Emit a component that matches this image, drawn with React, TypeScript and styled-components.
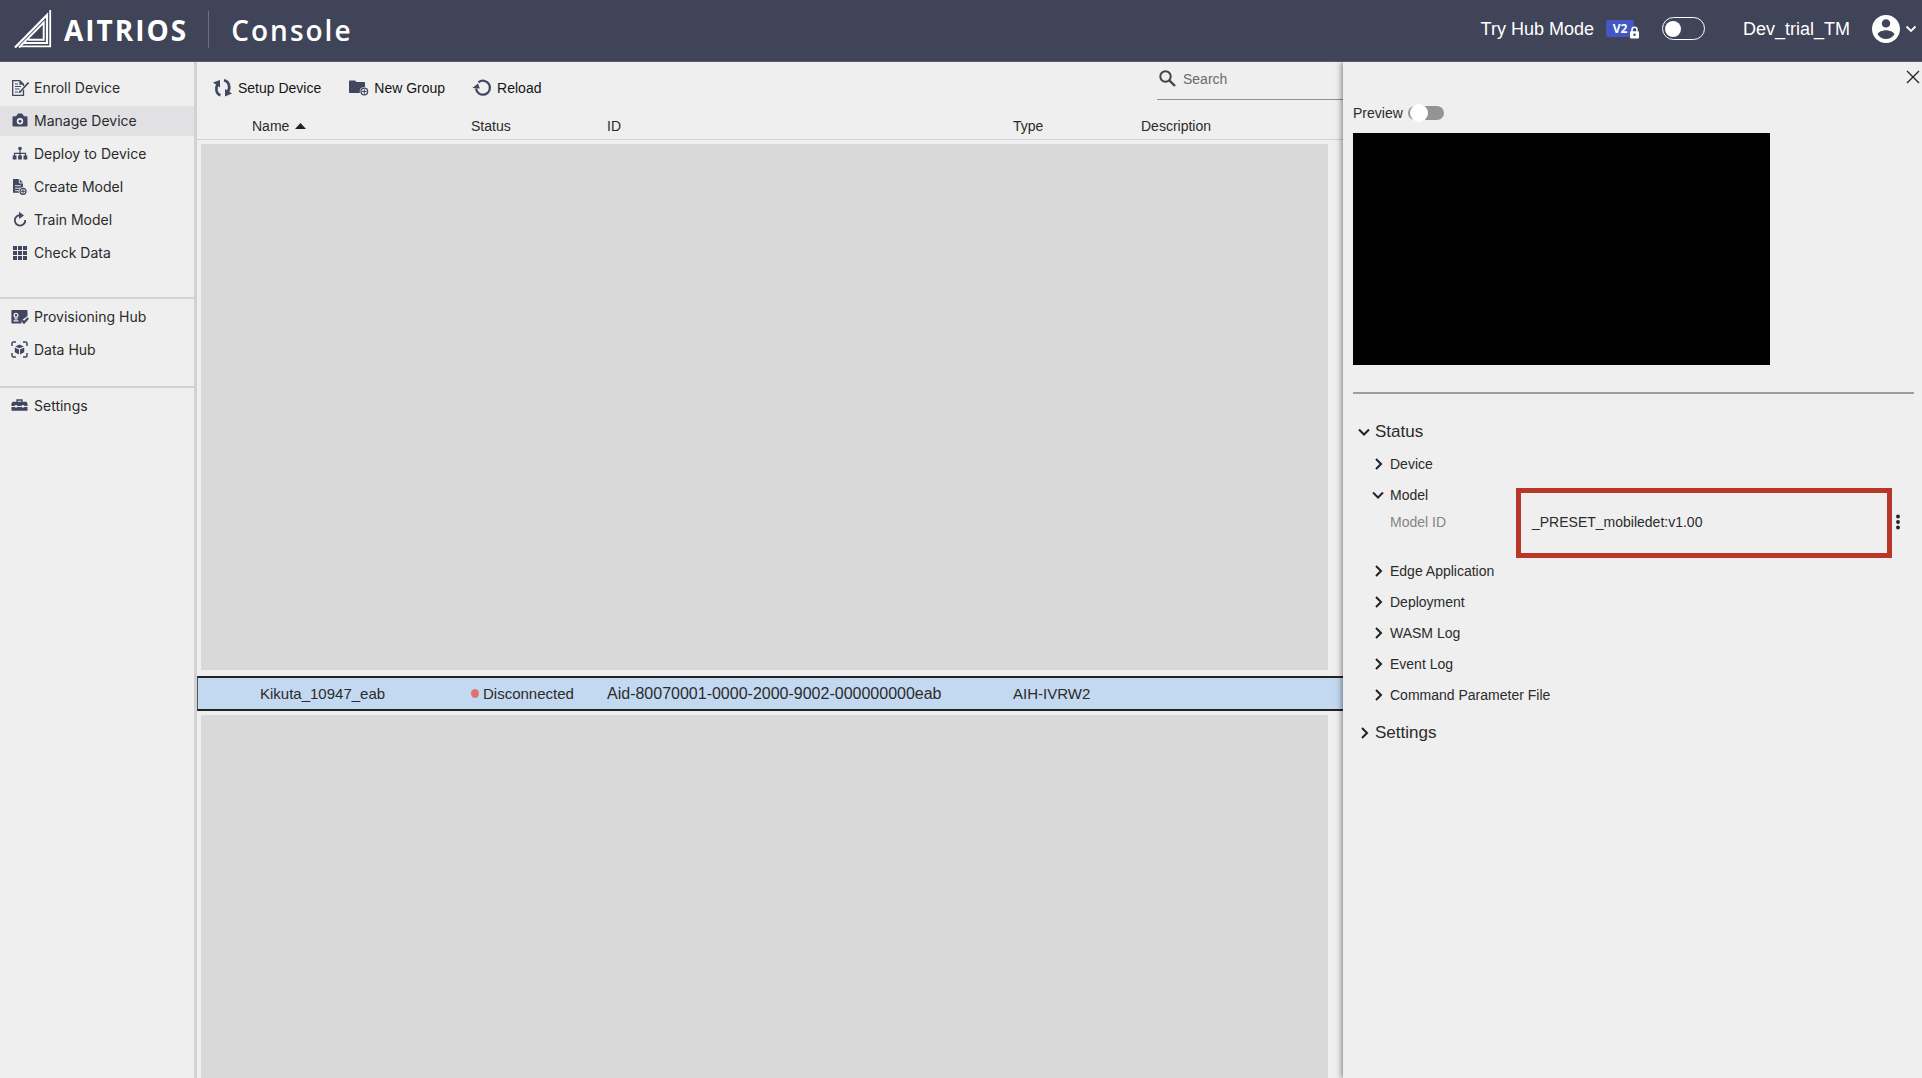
import React, { useState } from 'react';
import styled, { createGlobalStyle } from 'styled-components';

const color = {
  bar: '#404458',
  page: '#efefef',
  line: '#d2d2d2',
  icon: '#414760',
  text: '#2b2b2b',
};

const GlobalStyle = createGlobalStyle`
  *, *::before, *::after { box-sizing: border-box; }
  body {
    margin: 0;
    background: ${color.page};
    color: ${color.text};
    font-family: "Liberation Sans", Arial, sans-serif;
    font-size: 14px;
    line-height: 20px;
  }
  button, input { font: inherit; color: inherit; }
  button { border: 0; padding: 0; background: none; cursor: pointer; }
  svg { display: block; flex: none; }
`;

const Shell = styled.div`
  display: flex;
  flex-direction: column;
  height: 100vh;
  overflow: hidden;
`;

const TopBar = styled.header`
  display: flex;
  justify-content: space-between;
  flex: none;
  height: 62px;
  padding: 0 5px 0 14px;
  background: ${color.bar};
  border-bottom: 1px solid #5a5570;
  color: #fff;
`;

const Brand = styled.div`
  display: flex;
  align-items: center;
  padding-bottom: 3px;
`;

const Wordmark = styled.span<{ $weight: number }>`
  font-family: "Open Sans", sans-serif;
  font-size: 28px;
  line-height: 36px;
  font-weight: ${(p) => p.$weight};
  letter-spacing: 2px;
  padding-top: 1px;
`;

const BrandName = styled.span`
  display: flex;
  margin-left: 12px;
`;

const BrandRule = styled.span`
  width: 1px;
  height: 37px;
  margin: 0 22px 0 20px;
  background: #6d7080;
`;

const Account = styled.div`
  display: flex;
  align-items: center;
  padding-bottom: 4px;
  font-size: 18px;
`;

const ModeLabel = styled.label`
  display: flex;
  align-items: center;
  cursor: pointer;
`;

const Badge = styled.span`
  position: relative;
  width: 28px;
  height: 17px;
  margin: 0 28px 0 12px;
  border-radius: 2px;
  background: #4257c4;
  font: 700 12px/17px "Open Sans", sans-serif;
  text-align: center;
  svg { position: absolute; left: 23px; top: 6px; }
`;

const ModeSwitch = styled.input`
  appearance: none;
  display: flex;
  align-items: center;
  width: 43px;
  height: 23px;
  margin: 0;
  padding: 0 2px;
  border: 1px solid #fff;
  border-radius: 12px;
  &::before {
    content: "";
    width: 16px;
    height: 16px;
    border-radius: 50%;
    background: #fff;
  }
  &:checked { justify-content: flex-end; }
`;

const UserName = styled.span`
  margin: 0 22px 0 38px;
`;

const UserButton = styled.button`
  display: flex;
  align-items: center;
  gap: 5px;
`;

const Body = styled.div`
  display: grid;
  grid-template-columns: 197px minmax(0, 1fr) 579px;
  flex: 1;
  min-height: 0;
`;

const Sidebar = styled.nav`
  border-right: 3px solid ${color.line};
`;

const NavGroup = styled.ul<{ $top: number; $bottom: number; $last?: boolean }>`
  display: flex;
  flex-direction: column;
  gap: 3px;
  margin: 0;
  padding: ${(p) => p.$top}px 0 ${(p) => p.$bottom}px;
  list-style: none;
  border-bottom: ${(p) => (p.$last ? 0 : 2)}px solid ${color.line};
`;

const NavLink = styled.a<{ $active?: boolean }>`
  display: flex;
  align-items: center;
  gap: 5px;
  height: 30px;
  padding-left: 11px;
  background: ${(p) => (p.$active ? '#e1e1e4' : 'transparent')};
  color: ${color.text};
  font-family: Inter, sans-serif;
  text-decoration: none;
`;

const Main = styled.main`
  min-width: 0;
  overflow: hidden;
`;

const Toolbar = styled.div`
  display: flex;
  justify-content: space-between;
  height: 53px;
  padding-left: 15px;
`;

const Actions = styled.div`
  display: flex;
  align-items: center;
  gap: 27px;
  padding-bottom: 2px;
`;

const Action = styled.button`
  display: flex;
  align-items: center;
  gap: 5px;
  color: #151515;
`;

const SearchBox = styled.label`
  display: flex;
  align-items: center;
  gap: 7px;
  width: 186px;
  height: 38px;
  padding: 0 0 4px 2px;
  border-bottom: 1px solid #8f8f8f;
`;

const SearchInput = styled.input`
  width: 100%;
  min-width: 0;
  padding: 0;
  border: 0;
  outline: 0;
  background: none;
  &::placeholder { color: #6a6a70; opacity: 1; }
`;

const Table = styled.table`
  width: 100%;
  table-layout: fixed;
  border-collapse: separate;
  border-spacing: 0;
  text-align: left;
`;

const HeadCell = styled.th<{ $width?: number; $indent?: number }>`
  width: ${(p) => (p.$width ? `${p.$width}px` : 'auto')};
  height: 25px;
  padding: 0 0 3px ${(p) => p.$indent || 0}px;
  border-bottom: 1px solid ${color.line};
  font-weight: 400;
`;

const SortButton = styled.button`
  display: flex;
  align-items: center;
  gap: 6px;
`;

const MaskCell = styled.td`
  padding: 4px 15px 6px 4px;
`;

const Mask = styled.div`
  height: 526px;
  background: #d9d9d9;
`;

const DeviceRow = styled.tr`
  background: #c3d9f1;
  font-size: 15px;
`;

const Cell = styled.td<{ $indent?: number; $large?: boolean }>`
  height: 35px;
  padding: 0 0 0 ${(p) => p.$indent || 0}px;
  border: 0 solid #222;
  border-width: 2px 0;
  font-size: ${(p) => (p.$large ? 16 : 15)}px;
  &:first-child { border-left: 1px solid #555; }
`;

const State = styled.span`
  display: flex;
  align-items: center;
  gap: 4px;
  &::before {
    content: "";
    width: 8px;
    height: 9px;
    border-radius: 50%;
    background: #e0716c;
  }
`;

const Panel = styled.aside`
  position: relative;
  padding: 8px 8px 0 10px;
  background: ${color.page};
  box-shadow: -1px 0 6px rgba(0, 0, 0, 0.5);
  clip-path: inset(0 0 0 -12px);
`;

const PanelTop = styled.div`
  display: flex;
  justify-content: flex-end;
  height: 33px;
  margin-right: -6px;
`;

const CloseButton = styled.button`
  height: 14px;
`;

const PreviewLabel = styled.label`
  display: flex;
  align-items: center;
  gap: 5px;
  width: max-content;
  height: 20px;
`;

const PreviewSwitch = styled.input`
  appearance: none;
  display: flex;
  align-items: center;
  width: 36px;
  height: 14px;
  margin: 0;
  border-radius: 7px;
  background: #949494;
  &::before {
    content: "";
    width: 18px;
    height: 18px;
    margin: 0 2px;
    border-radius: 50%;
    background: #fff;
  }
  &:checked { justify-content: flex-end; }
`;

const PreviewScreen = styled.div`
  width: 417px;
  max-width: 100%;
  height: 232px;
  margin: 10px 0 27px;
  background: #000;
`;

const Divider = styled.hr`
  height: 2px;
  margin: 0 0 22px;
  border: 0;
  background: #9d9d9d;
`;

const Group = styled.section`
  margin-bottom: 7px;
`;

const Fold = styled.button<{ $level: number }>`
  display: flex;
  align-items: center;
  gap: ${(p) => (p.$level ? 5 : 4)}px;
  height: ${(p) => (p.$level ? 31 : 32)}px;
  padding-left: ${(p) => (p.$level ? 18 : 4)}px;
  font-size: ${(p) => (p.$level ? 14 : 17)}px;
`;

const Field = styled.div`
  display: grid;
  grid-template-columns: 126px 1fr 12px;
  align-items: center;
  margin: 0 10px 21px 37px;
  height: 24px;
`;

const FieldName = styled.span`
  color: #858585;
`;

const FieldValue = styled.span`
  position: relative;
  padding-left: 16px;
`;

const Highlight = styled.span`
  position: absolute;
  inset: -24px 0 -26px 0;
  border: 5px solid #b83729;
  pointer-events: none;
`;

const MoreButton = styled.button`
  display: flex;
  justify-content: center;
`;

const svgProps = { 'aria-hidden': true, fill: 'none', stroke: color.icon } as const;

const LogoIcon = () => (
  <svg width="38" height="38" viewBox="0 0 38 38" aria-hidden="true" fill="none" stroke="#fff">
    <path d="M36.200 0V36.300H6" strokeWidth="1.800" />
    <path d="M1 37.500 33 5V33H10" strokeWidth="2.200" />
    <path d="M5 37.500 29.700 12.500V29.700H14" strokeWidth="1.900" />
  </svg>
);

const LockIcon = () => (
  <svg width="11" height="13" viewBox="0 0 11 13" aria-hidden="true">
    <path d="M3 6V3.800a2.500 2.500 0 0 1 5 0V6" fill="none" stroke="#fff" strokeWidth="1.500" />
    <rect x="1" y="5.200" width="9" height="7.200" rx="1" fill="#fff" />
    <circle cx="5.500" cy="8.700" r="1.200" fill={color.bar} />
  </svg>
);

const UserIcon = () => (
  <svg width="28" height="28" viewBox="2 2 20 20" aria-hidden="true" fill="#fff">
    <path d="M12 2C6.480 2 2 6.480 2 12s4.480 10 10 10 10-4.480 10-10S17.520 2 12 2zm0 3c1.660 0 3 1.340 3 3s-1.340 3-3 3-3-1.340-3-3 1.340-3 3-3zm0 14.200c-2.500 0-4.710-1.280-6-3.220.03-1.990 4-3.080 6-3.080 1.990 0 5.970 1.090 6 3.080-1.290 1.940-3.500 3.220-6 3.220z" />
  </svg>
);

const CaretIcon = () => (
  <svg width="12" height="8" viewBox="0 0 12 8" aria-hidden="true" fill="none" stroke="#fff" strokeWidth="1.800">
    <path d="M1.500 1.500 6 6l4.500-4.500" />
  </svg>
);

const Chevron = ({ open }: { open: boolean }) => (
  <svg width="14" height="14" viewBox="0 0 14 14" aria-hidden="true" fill="none" stroke="#222" strokeWidth="2">
    <path d={open ? 'M2 4.500 7 9.500l5-5' : 'M5 2l5 5-5 5'} />
  </svg>
);

const EnrollIcon = () => (
  <svg width="18" height="18" viewBox="0 0 18 18" {...svgProps}>
    <path d="M9 1.700H1.700v14.600h10.800V11M9 1.700l3.500 3.500V7M9 1.700V5h3" strokeWidth="1.300" />
    <path d="M4 5h3M4 7.500h6M4 10h4.500M4 13h3" />
    <path d="M17.500 3.500 9.500 12.500" strokeWidth="1.600" />
    <path d="m7.500 14.300 1-3 2 2z" fill={color.icon} stroke="none" />
  </svg>
);

const CameraIcon = () => (
  <svg width="18" height="18" viewBox="0 0 18 18" aria-hidden="true" fill={color.icon}>
    <path d="M6 3 7 1.500h4L12.200 3 13 4.200h2.200c.8 0 1.300.5 1.300 1.300v7.700c0 .8-.5 1.300-1.300 1.300H2.800c-.8 0-1.300-.5-1.300-1.300V5.500c0-.8.5-1.300 1.300-1.300H5z" />
    <circle cx="9" cy="9.200" r="3.200" fill="#efefef" />
    <circle cx="9" cy="9.200" r="1.500" />
  </svg>
);

const DeployIcon = () => (
  <svg width="18" height="18" viewBox="0 0 18 18" {...svgProps} fill={color.icon}>
    <circle cx="9" cy="3.500" r="1.800" stroke="none" />
    <path d="M9 5v7M3.500 12V8.300h11V12" fill="none" strokeWidth="1.200" />
    <path d="M1.700 10.500h3.800v4H1.700zM7.100 10.500h3.800v4H7.100zM12.500 10.500h3.800v4h-3.800z" stroke="none" />
  </svg>
);

const ModelIcon = () => (
  <svg width="18" height="18" viewBox="0 0 18 18" aria-hidden="true" fill={color.icon}>
    <path d="M2 1h6.500L12 4.700v10.100H2z" />
    <path d="M8.300 1v4H12M4 7.700h6M4 10.200h5M4 12.700h4" stroke="#efefef" strokeWidth="0.900" fill="none" />
    <circle cx="12" cy="13.300" r="4.300" fill="#efefef" />
    <circle cx="12" cy="13.300" r="3" fill="none" stroke={color.icon} strokeWidth="1.200" />
    <path d="M12 11.200v4.200M9.900 13.300h4.200" stroke={color.icon} />
  </svg>
);

const TrainIcon = () => (
  <svg width="18" height="18" viewBox="0 0 18 18" {...svgProps}>
    <path d="M10 4.300A5.200 5.200 0 1 0 14.200 9" strokeWidth="1.800" />
    <path d="m8 .8 5 3.700-5 3.500z" fill={color.icon} stroke="none" />
  </svg>
);

const GridIcon = () => (
  <svg width="18" height="18" viewBox="0 0 18 18" aria-hidden="true" fill={color.icon}>
    {[2, 7, 12].map((y) => [2, 7, 12].map((x) => <rect key={`${x}-${y}`} x={x} y={y} width="4" height="4" />))}
  </svg>
);

const ProvisionIcon = () => (
  <svg width="18" height="18" viewBox="0 0 18 18" {...svgProps}>
    <path d="M1.200 2h14.600c.5 0 .7.300.7.700V8l-6 4.500V15.500H1.200C.7 15.500.4 15.200.4 14.800V2.700c0-.4.300-.7.800-.7z" fill={color.icon} stroke="none" />
    <circle cx="5" cy="7.300" r="1.900" stroke="#efefef" strokeWidth="1.300" />
    <path d="M2.500 12.800h5M3.500 10.800h3" stroke="#efefef" strokeWidth="1.200" />
    <path d="m11 12.300 2 2.200 4.200-4.600" strokeWidth="2.200" />
  </svg>
);

const CubeIcon = () => (
  <svg width="18" height="18" viewBox="0 0 18 18" {...svgProps}>
    <path d="M1 5V2.500C1 1.700 1.500 1 2.500 1H5M12 1h2.500c1 0 1.500.7 1.500 1.500V5M16 12v2.500c0 .8-.5 1.500-1.500 1.500H12M5 16H2.500C1.500 16 1 15.300 1 14.500V12" strokeWidth="1.500" />
    <path d="M8.500 3.600 12.800 5.400 8.500 7.300 4.200 5.400zM3.800 6.500 8 8.400v5L3.800 11.200zM13.200 6.500 9 8.400v5l4.200-2.200z" fill={color.icon} stroke="none" />
  </svg>
);

const ToolboxIcon = () => (
  <svg width="18" height="18" viewBox="0 0 18 18" {...svgProps}>
    <path d="M6 5V3h5v2" strokeWidth="1.300" />
    <path d="M1.500 4.800h14l1 1.700V9H.5V6.500zM.5 10h16v3.700H.5z" fill={color.icon} stroke="none" />
    <circle cx="5" cy="9.300" r="1.400" fill="#efefef" stroke="none" />
    <circle cx="12" cy="9.300" r="1.400" fill="#efefef" stroke="none" />
  </svg>
);

const SetupIcon = () => (
  <svg width="21" height="20" viewBox="0 0 21 20" {...svgProps}>
    <path d="M8.500 17.300C4.200 16 2.800 10.500 6 5.500M12 2.300c5 1 6.800 7 3.700 12" strokeWidth="2.600" />
    <path d="M1 4.500 8 2v7.500zM20 15.500l-7 3V11z" fill={color.icon} stroke="none" />
  </svg>
);

const FolderIcon = () => (
  <svg width="21" height="20" viewBox="0 0 21 20" {...svgProps}>
    <path d="M1 3.500C1 3 1.300 2.600 2 2.600h5L8.500 4H16c.6 0 1 .4 1 1v10H2c-.6 0-1-.4-1-1z" fill={color.icon} stroke="none" />
    <circle cx="16.300" cy="13.500" r="4.600" fill="#efefef" stroke="none" />
    <circle cx="16.300" cy="13.500" r="3.300" strokeWidth="1.300" />
    <path d="M16.300 11.300v4.400M14.100 13.500h4.400" />
  </svg>
);

const ReloadIcon = () => (
  <svg width="20" height="20" viewBox="0 0 20 20" {...svgProps}>
    <path d="M6.500 4.300A7 7 0 1 1 4 10.500" strokeWidth="2.200" />
    <path d="M.3 10 6 5.500 7.800 10.500z" fill={color.icon} stroke="none" />
  </svg>
);

const SearchIcon = () => (
  <svg width="17" height="17" viewBox="0 0 17 17" {...svgProps} stroke="#44444c">
    <circle cx="6.500" cy="6.500" r="5.200" strokeWidth="2" />
    <path d="m10.300 10.300 5.700 5.700" strokeWidth="2.400" />
  </svg>
);

const navGroups = [
  {
    top: 11,
    bottom: 29,
    items: [
      { label: 'Enroll Device', Icon: EnrollIcon },
      { label: 'Manage Device', Icon: CameraIcon, active: true },
      { label: 'Deploy to Device', Icon: DeployIcon },
      { label: 'Create Model', Icon: ModelIcon },
      { label: 'Train Model', Icon: TrainIcon },
      { label: 'Check Data', Icon: GridIcon },
    ],
  },
  {
    top: 3,
    bottom: 21,
    items: [
      { label: 'Provisioning Hub', Icon: ProvisionIcon },
      { label: 'Data Hub', Icon: CubeIcon },
    ],
  },
  { top: 3, bottom: 0, items: [{ label: 'Settings', Icon: ToolboxIcon }] },
];

const statusSections = ['Device', 'Model', 'Edge Application', 'Deployment', 'WASM Log', 'Event Log', 'Command Parameter File'];

export default function App() {
  const [open, setOpen] = useState<Record<string, boolean>>({ Status: true, Model: true });
  const toggle = (name: string) => setOpen((o) => ({ ...o, [name]: !o[name] }));

  return (
    <>
      <GlobalStyle />
      <Shell>
        <TopBar>
          <Brand>
            <LogoIcon />
            <BrandName>
              <Wordmark $weight={700}>AITRIOS</Wordmark>
            </BrandName>
            <BrandRule />
            <Wordmark $weight={600}>Console</Wordmark>
          </Brand>
          <Account>
            <ModeLabel>
              Try Hub Mode
              <Badge>
                V2
                <LockIcon />
              </Badge>
              <ModeSwitch type="checkbox" role="switch" />
            </ModeLabel>
            <UserName>Dev_trial_TM</UserName>
            <UserButton aria-label="Account menu">
              <UserIcon />
              <CaretIcon />
            </UserButton>
          </Account>
        </TopBar>

        <Body>
          <Sidebar>
            {navGroups.map((group, i) => (
              <NavGroup key={i} $top={group.top} $bottom={group.bottom} $last={i === navGroups.length - 1}>
                {group.items.map(({ label, Icon, active }: { label: string; Icon: React.FC; active?: boolean }) => (
                  <li key={label}>
                    <NavLink href="#" $active={active}>
                      <Icon />
                      {label}
                    </NavLink>
                  </li>
                ))}
              </NavGroup>
            ))}
          </Sidebar>

          <Main>
            <Toolbar>
              <Actions>
                <Action><SetupIcon />Setup Device</Action>
                <Action><FolderIcon />New Group</Action>
                <Action><ReloadIcon />Reload</Action>
              </Actions>
              <SearchBox>
                <SearchIcon />
                <SearchInput type="text" placeholder="Search" aria-label="Search" />
              </SearchBox>
            </Toolbar>
            <Table>
              <thead>
                <tr>
                  <HeadCell $width={274} $indent={55}>
                    <SortButton>
                      Name
                      <svg width="11" height="6" viewBox="0 0 11 6" aria-hidden="true"><path d="M0 6 5.500 0 11 6z" fill="#222" /></svg>
                    </SortButton>
                  </HeadCell>
                  <HeadCell $width={136}>Status</HeadCell>
                  <HeadCell $width={406}>ID</HeadCell>
                  <HeadCell $width={128}>Type</HeadCell>
                  <HeadCell>Description</HeadCell>
                </tr>
              </thead>
              <tbody>
                <tr><MaskCell colSpan={5}><Mask /></MaskCell></tr>
                <DeviceRow>
                  <Cell $indent={62}>Kikuta_10947_eab</Cell>
                  <Cell><State>Disconnected</State></Cell>
                  <Cell $large>Aid-80070001-0000-2000-9002-000000000eab</Cell>
                  <Cell>AIH-IVRW2</Cell>
                  <Cell />
                </DeviceRow>
                <tr><MaskCell colSpan={5}><Mask /></MaskCell></tr>
              </tbody>
            </Table>
          </Main>

          <Panel>
            <PanelTop>
              <CloseButton aria-label="Close">
                <svg width="14" height="14" viewBox="0 0 14 14" aria-hidden="true" stroke="#222" strokeWidth="1.300">
                  <path d="m1 1 12 12M13 1 1 13" />
                </svg>
              </CloseButton>
            </PanelTop>
            <PreviewLabel>
              Preview
              <PreviewSwitch type="checkbox" role="switch" />
            </PreviewLabel>
            <PreviewScreen />
            <Divider />
            <Group>
              <Fold $level={0} aria-expanded={!!open.Status} onClick={() => toggle('Status')}>
                <Chevron open={!!open.Status} />
                Status
              </Fold>
              {open.Status &&
                statusSections.map((name) => (
                  <div key={name}>
                    <Fold $level={1} aria-expanded={!!open[name]} onClick={() => toggle(name)}>
                      <Chevron open={!!open[name]} />
                      {name}
                    </Fold>
                    {name === 'Model' && open.Model && (
                      <Field>
                        <FieldName>Model ID</FieldName>
                        <FieldValue>
                          _PRESET_mobiledet:v1.00
                          <Highlight />
                        </FieldValue>
                        <MoreButton aria-label="More">
                          <svg width="4" height="16" viewBox="0 0 4 16" aria-hidden="true" fill="#222">
                            <circle cx="2" cy="2.500" r="1.900" />
                            <circle cx="2" cy="8" r="1.900" />
                            <circle cx="2" cy="13.500" r="1.900" />
                          </svg>
                        </MoreButton>
                      </Field>
                    )}
                  </div>
                ))}
            </Group>
            <Fold $level={0} aria-expanded={!!open.Settings} onClick={() => toggle('Settings')}>
              <Chevron open={!!open.Settings} />
              Settings
            </Fold>
          </Panel>
        </Body>
      </Shell>
    </>
  );
}
